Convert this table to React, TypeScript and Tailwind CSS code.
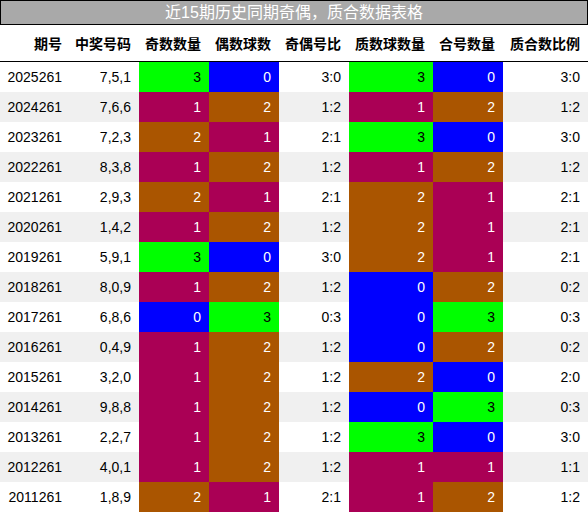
const rows: [string, string, number, number, string, number, number, string][] = [
  ["2025261", "7,5,1", 3, 0, "3:0", 3, 0, "3:0"],
  ["2024261", "7,6,6", 1, 2, "1:2", 1, 2, "1:2"],
  ["2023261", "7,2,3", 2, 1, "2:1", 3, 0, "3:0"],
  ["2022261", "8,3,8", 1, 2, "1:2", 1, 2, "1:2"],
  ["2021261", "2,9,3", 2, 1, "2:1", 2, 1, "2:1"],
  ["2020261", "1,4,2", 1, 2, "1:2", 2, 1, "2:1"],
  ["2019261", "5,9,1", 3, 0, "3:0", 2, 1, "2:1"],
  ["2018261", "8,0,9", 1, 2, "1:2", 0, 2, "0:2"],
  ["2017261", "6,8,6", 0, 3, "0:3", 0, 3, "0:3"],
  ["2016261", "0,4,9", 1, 2, "1:2", 0, 2, "0:2"],
  ["2015261", "3,2,0", 1, 2, "1:2", 2, 0, "2:0"],
  ["2014261", "9,8,8", 1, 2, "1:2", 0, 3, "0:3"],
  ["2013261", "2,2,7", 1, 2, "1:2", 3, 0, "3:0"],
  ["2012261", "4,0,1", 1, 2, "1:2", 1, 1, "1:1"],
  ["2011261", "1,8,9", 2, 1, "2:1", 1, 2, "1:2"],
];

const headers = ["期号", "中奖号码", "奇数数量", "偶数球数", "奇偶号比", "质数球数量", "合号数量", "质合数比例"];

// colour of a count cell depends on its value
const countColor: Record<number, string> = {
  0: "bg-[#0000ff] text-white",
  1: "bg-[#aa0055] text-white",
  2: "bg-[#aa5500] text-white",
  3: "bg-[#00ff00] text-black",
};

const grid = "grid grid-cols-[70px_69px_70px_70px_70px_84px_70px_85px]";

function Cell({ children, className = "" }: { children: React.ReactNode; className?: string }) {
  return <div className={`flex h-[30px] items-center justify-end pr-2 ${className}`}>{children}</div>;
}

export default function App() {
  return (
    <div
      className="w-[588px] bg-white text-[14px] text-black"
      style={{ fontFamily: '"Liberation Sans", "Noto Sans CJK SC", sans-serif' }}
    >
      <div className="flex h-[25px] items-center justify-center border border-black bg-[#a9a9a9] text-[16px] text-white">
        近15期历史同期奇偶，质合数据表格
      </div>
      <div className={`${grid} h-[37px] border-b border-black bg-white font-bold`}>
        {headers.map((h) => (
          <div key={h} className="flex items-center justify-end pr-2 pt-[3px]">
            {h}
          </div>
        ))}
      </div>
      {rows.map((r, i) => (
        <div key={r[0]} className={`${grid} ${i % 2 === 1 ? "bg-[#f0f0f0]" : "bg-white"}`}>
          <Cell>{r[0]}</Cell>
          <Cell>{r[1]}</Cell>
          <Cell className={countColor[r[2]]}>{r[2]}</Cell>
          <Cell className={countColor[r[3]]}>{r[3]}</Cell>
          <Cell>{r[4]}</Cell>
          <Cell className={countColor[r[5]]}>{r[5]}</Cell>
          <Cell className={countColor[r[6]]}>{r[6]}</Cell>
          <Cell>{r[7]}</Cell>
        </div>
      ))}
    </div>
  );
}
